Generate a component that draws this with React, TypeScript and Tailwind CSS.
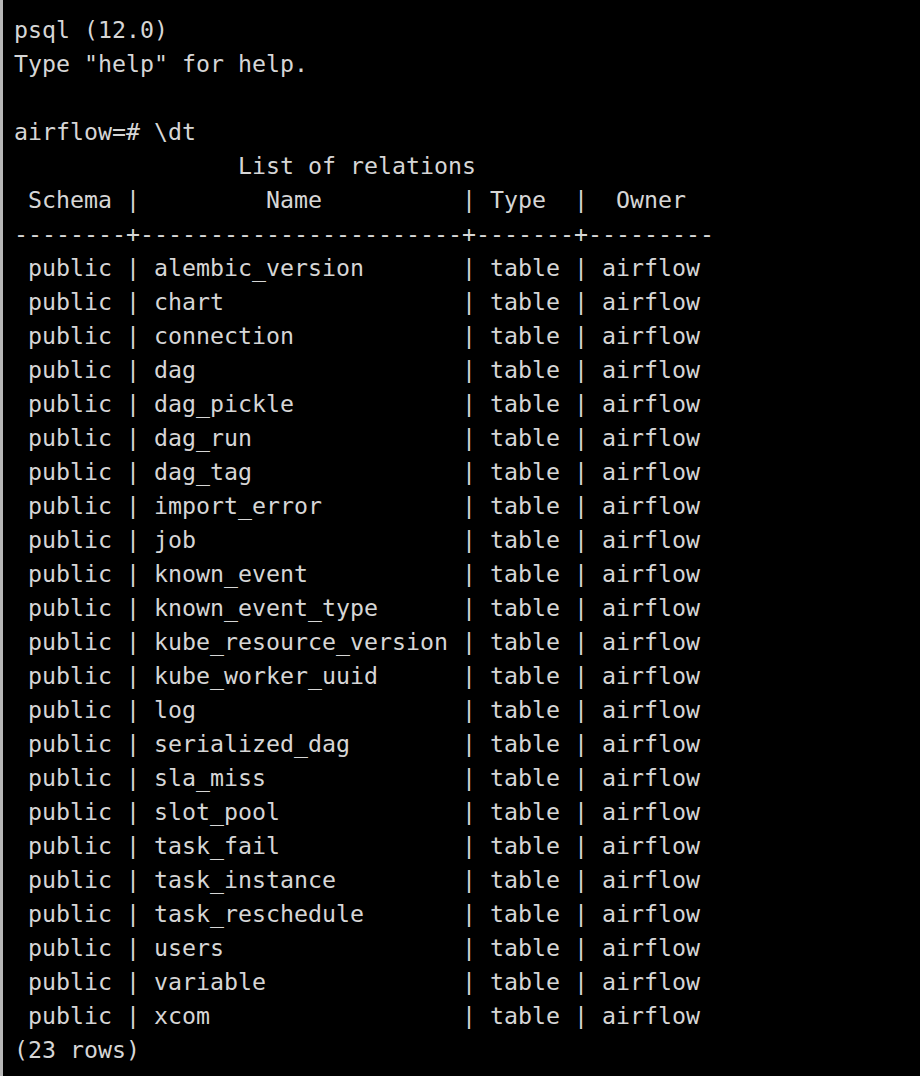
import React from 'react';

const tables = [
  'alembic_version',
  'chart',
  'connection',
  'dag',
  'dag_pickle',
  'dag_run',
  'dag_tag',
  'import_error',
  'job',
  'known_event',
  'known_event_type',
  'kube_resource_version',
  'kube_worker_uuid',
  'log',
  'serialized_dag',
  'sla_miss',
  'slot_pool',
  'task_fail',
  'task_instance',
  'task_reschedule',
  'users',
  'variable',
  'xcom',
];

const lines: string[] = [
  'psql (12.0)',
  'Type "help" for help.',
  '',
  'airflow=# \\dt',
  '                List of relations',
  ' Schema |         Name          | Type  |  Owner',
  '--------+-----------------------+-------+---------',
  ...tables.map((t) => ` public | ${t.padEnd(21, ' ')} | table | airflow`),
  `(${tables.length} rows)`,
];

const App: React.FC = () => {
  return (
    <div className="w-[920px] h-[1076px] bg-black flex overflow-hidden">
      <div className="w-[3px] h-full bg-[#b8b8b8] shrink-0"></div>
      <div className="flex-1 pl-[11px] pt-[13px] font-['DejaVu_Sans_Mono','Liberation_Mono',monospace] text-[23.25px] text-[#d6d6d6]">
        {lines.map((line, i) => (
          <div key={i} className="h-[34px] leading-[34px] whitespace-pre">
            {line}
          </div>
        ))}
      </div>
    </div>
  );
};

export default App;
